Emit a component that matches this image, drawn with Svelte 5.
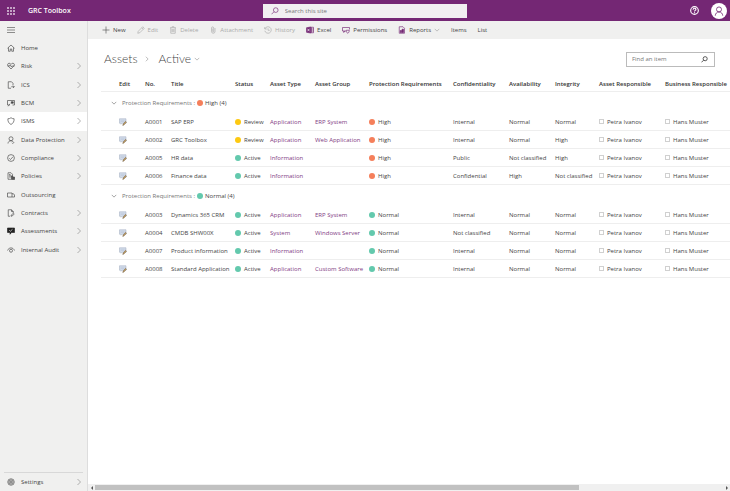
<script lang="ts">
	interface NavItem {
		label: string;
		icon: string;
		sub?: boolean;
	}

	interface Asset {
		no: string;
		title: string;
		status: string;
		type: string;
		group: string;
		conf: string;
		avail: string;
		integ: string;
	}

	const nav: NavItem[] = [
		{ label: "Home", icon: "home" },
		{ label: "Risk", icon: "heart", sub: true },
		{ label: "ICS", icon: "docArrow", sub: true },
		{ label: "BCM", icon: "screen", sub: true },
		{ label: "ISMS", icon: "shield", sub: true },
		{ label: "Data Protection", icon: "person", sub: true },
		{ label: "Compliance", icon: "check", sub: true },
		{ label: "Policies", icon: "policy", sub: true },
		{ label: "Outsourcing", icon: "truck" },
		{ label: "Contracts", icon: "contract", sub: true },
		{ label: "Assessments", icon: "assess", sub: true },
		{ label: "Internal Audit", icon: "eye", sub: true },
	];

	const commands = [
		{ label: "New", icon: "plus" },
		{ label: "Edit", icon: "pencil", off: true },
		{ label: "Delete", icon: "trash", off: true },
		{ label: "Attachment", icon: "clip", off: true },
		{ label: "History", icon: "history", off: true },
		{ label: "Excel", icon: "excel" },
		{ label: "Permissions", icon: "perms" },
		{ label: "Reports", icon: "report", menu: true },
		{ label: "Items" },
		{ label: "List" },
	];

	const columns = [
		"Edit",
		"No.",
		"Title",
		"Status",
		"Asset Type",
		"Asset Group",
		"Protection Requirements",
		"Confidentiality",
		"Availability",
		"Integrity",
		"Asset Responsible",
		"Business Responsible",
	];

	function asset(no: string, title: string, status: string, type: string, group: string, conf: string, avail: string, integ: string): Asset {
		return { no, title, status, type, group, conf, avail, integ };
	}

	const groups = [
		{
			level: "High",
			rows: [
				asset("A0001", "SAP ERP", "Review", "Application", "ERP System", "Internal", "Normal", "Normal"),
				asset("A0002", "GRC Toolbox", "Review", "Application", "Web Application", "Internal", "Normal", "High"),
				asset("A0005", "HR data", "Active", "Information", "", "Public", "Not classified", "High"),
				asset("A0006", "Finance data", "Active", "Information", "", "Confidential", "High", "Not classified"),
			],
		},
		{
			level: "Normal",
			rows: [
				asset("A0003", "Dynamics 365 CRM", "Active", "Application", "ERP System", "Internal", "Normal", "Normal"),
				asset("A0004", "CMDB SHW00X", "Active", "System", "Windows Server", "Not classified", "Normal", "Normal"),
				asset("A0007", "Product information", "Active", "Information", "", "Internal", "Normal", "Normal"),
				asset("A0008", "Standard Application", "Active", "Application", "Custom Software", "Internal", "Normal", "Normal"),
			],
		},
	];

	let current = $state("ISMS");
	let closed: Record<string, boolean> = $state({});
</script>

{#snippet icon(name: string)}
	<svg class="icon" viewBox="0 0 16 16" aria-hidden="true">
		{#if name === "home"}
			<path d="M1 8.5 8 2l7 6.5M3 7v7.5h3.5V10h3v4.5H13V7" />
		{:else if name === "heart"}
			<path d="M8 14 2 7.600C.4 5.600 1.400 2.500 4.300 2.500 6 2.500 7.200 3.300 8 4.600 8.800 3.300 10 2.500 11.700 2.500c2.900 0 3.900 3.100 2.300 5.100z" />
			<path d="M1 8h4l1.500-2.500L9 10l1.500-2H15" />
		{:else if name === "docArrow"}
			<path d="M8 14.500H2.500v-13H9l3 3V8M8.500 11.500h6M12 9l2.500 2.500L12 14" />
		{:else if name === "screen"}
			<path d="M5 12H1V3h14v9h-4M2.500 14.500 6 9.500" />
			<path class="solid" d="M8.500 5.500h4v3h-4z" />
		{:else if name === "shield"}
			<path d="M8 1.500C6 3 4 3.500 1.800 3.500 1.500 9 3.500 12.500 8 15c4.500-2.500 6.500-6 6.200-11.500C12 3.500 10 3 8 1.500z" />
		{:else if name === "person"}
			<circle cx="8" cy="5.500" r="4" />
			<path d="M2 15c.3-3.500 2.500-5.500 6-5.500 2 0 3.500.8 4.500 2.500M10 13.500l1.500 1.500 3-3" />
		{:else if name === "check"}
			<circle cx="8" cy="8" r="6.800" />
			<path d="m4.500 8.500 2.500 2.500 5-5.500" />
		{:else if name === "policy"}
			<path d="M2 14.500v-13h6l3 3V8M4 5h3M4 7.500h5M4 10h4M2 14.500h6" />
			<path class="solid" d="M9 8h2.500v7H9zM12.500 10H15v5h-2.500z" />
		{:else if name === "truck"}
			<path d="M1 4h9v8H1zM10 5.500h3l2 2.500v4h-5" />
		{:else if name === "contract"}
			<path d="M6 14.500H2.500v-13H9l3.500 3.500v3M9 1.500V5h3.500" />
			<path d="m8 14.500.5-2.500L13 8.500l1.500 1.500-4 4z" />
		{:else if name === "assess"}
			<path class="solid dark" d="M1 2h14v9H9l-3 3.500V11H1z" />
			<path class="light" d="m4.500 6.500 2.200 2L11 4.500" />
		{:else if name === "eye"}
			<path d="M1 9c1.500-3.500 4-5.200 7-5.200S13.500 5.500 15 9" />
			<circle cx="8" cy="9.500" r="3" />
		{:else if name === "gear"}
			<circle cx="8" cy="8" r="6.500" />
			<circle cx="8" cy="8" r="4.200" />
			<circle cx="8" cy="8" r="1.800" />
		{:else if name === "plus"}
			<path d="M8 1v14M1 8h14" />
		{:else if name === "pencil"}
			<path d="m1.500 14.500 1-4L11.500 1.500l3 3-9 9zM9.500 3.500l3 3" />
		{:else if name === "trash"}
			<path d="M2 3.500h12M6 3.500v-2h4v2M3.500 3.500v11h9v-11M6 6v6M8 6v6M10 6v6" />
		{:else if name === "clip"}
			<path d="M12 4v7.500c0 4-7 4-7 0V4c0-3 4.500-3 4.500 0v7c0 1.300-2 1.300-2 0V5" />
		{:else if name === "history"}
			<path d="M1.500 2v4h4M2 5.500a6.500 6.500 0 1 1-.3 4M8 4.500v4h3.500" />
		{:else if name === "excel"}
			<path d="M8 2.500h7v11H8M11 2.500v11M8 6h7M8 10h7" />
			<path class="solid" d="M1 3.500 9 2v12l-8-1.500z" />
			<path class="light" d="m3 5.500 4 5M7 5.500l-4 5" />
		{:else if name === "perms"}
			<path d="M8 10H1V3h14v4M3.500 10v3L6 10" />
			<path d="M8.500 8.500h6c0 3-1 5-3 6-2-1-3-3-3-6z" />
		{:else if name === "report"}
			<path d="M2.500 1.500H10l3 3v10H2.500z" />
			<path class="solid" d="M4.500 9H7v4H4.500zM8 6.500h3V13H8z" />
		{:else if name === "search"}
			<circle cx="9.500" cy="6.200" r="4.700" />
			<path d="M6 9.500 1 14.500" />
		{:else if name === "help"}
			<circle cx="8" cy="8" r="6.800" />
			<path d="M5.500 6.500c0-3.500 5-3.300 5-.4 0 1.600-2.500 1.800-2.500 3.600M8 11.300v1.400" />
		{:else if name === "user"}
			<circle cx="8" cy="5.500" r="4" />
			<path d="M2 15.500c.3-3.500 2.500-6 6-6s5.700 2.500 6 6" />
		{:else if name === "right"}
			<path d="m5 2 6 6-6 6" />
		{:else if name === "down"}
			<path d="m2 5 6 6 6-6" />
		{:else if name === "menu"}
			<path d="M0 3h16M0 8h16M0 13h16" />
		{/if}
	</svg>
{/snippet}

{#snippet dot(value: string)}
	<span class="dot {value.toLowerCase()}"></span>
{/snippet}

<div class="app">
	<header>
		<div class="brand">
			<button class="waffle" aria-label="App launcher">
				{#each Array(9) as _, i (i)}<i></i>{/each}
			</button>
			<a href="#top">GRC Toolbox</a>
		</div>
		<label class="site-search">
			{@render icon("search")}
			<input type="search" placeholder="Search this site" aria-label="Search this site" />
		</label>
		<div class="account">
			<button class="help" aria-label="Help">{@render icon("help")}</button>
			<button class="avatar" aria-label="Account">{@render icon("user")}</button>
		</div>
	</header>

	<aside>
		<button class="burger" aria-label="Collapse navigation">{@render icon("menu")}</button>
		<nav>
			{#each nav as item (item.label)}
				<a href="#{item.icon}" class:current={item.label === current} onclick={() => (current = item.label)}>
					{@render icon(item.icon)}
					<span>{item.label}</span>
					{#if item.sub}{@render icon("right")}{/if}
				</a>
			{/each}
		</nav>
		<div class="settings">
			<a href="#settings">
				{@render icon("gear")}
				<span>Settings</span>
				{@render icon("right")}
			</a>
		</div>
	</aside>

	<main>
		<div class="commands">
			{#each commands as c (c.label)}
				<button disabled={c.off}>
					{#if c.icon}{@render icon(c.icon)}{/if}
					{c.label}
					{#if c.menu}<span class="caret">{@render icon("down")}</span>{/if}
				</button>
			{/each}
		</div>

		<div class="title">
			<h1>Assets</h1>
			<span class="sep">{@render icon("right")}</span>
			<button class="view">Active <span class="caret">{@render icon("down")}</span></button>
			<label class="find">
				<input type="search" placeholder="Find an item" aria-label="Find an item" />
				{@render icon("search")}
			</label>
		</div>

		<div class="list">
			<table>
				<colgroup>
					{#each columns as _, i (i)}<col class="c{i}" />{/each}
				</colgroup>
				<thead>
					<tr>
						{#each columns as c (c)}<th scope="col">{c}</th>{/each}
					</tr>
				</thead>
				{#each groups as g (g.level)}
					<tbody>
						<tr class="group">
							<td colspan={columns.length}>
								<button onclick={() => (closed[g.level] = !closed[g.level])}>
									{@render icon(closed[g.level] ? "right" : "down")}
									<span class="field">Protection Requirements :</span>
									{@render dot(g.level)}
									<span>{g.level} ({g.rows.length})</span>
								</button>
							</td>
						</tr>
						{#if !closed[g.level]}
							{#each g.rows as r (r.no)}
								<tr>
									<td>
										<button class="edit" aria-label="Edit {r.title}">
											<svg viewBox="0 0 16 16" aria-hidden="true">
												<path fill="#d3dcea" stroke="#9eabbf" d="M1 1.500h13v9H6l-2 2v-2H1z" />
												<path stroke="#b4c1d4" d="M3 4.500h8M3 7h7" />
												<path fill="#c8a05a" stroke="#6b5f55" d="m7.500 15 .8-3L13 6.500l2 1.800-5 5.500z" />
											</svg>
										</button>
									</td>
									<td>{r.no}</td>
									<td>{r.title}</td>
									<td><span class="tag">{@render dot(r.status)}{r.status}</span></td>
									<td><a href="#{r.no}-type">{r.type}</a></td>
									<td>{#if r.group}<a href="#{r.no}-group">{r.group}</a>{/if}</td>
									<td><span class="tag">{@render dot(g.level)}{g.level}</span></td>
									<td>{r.conf}</td>
									<td>{r.avail}</td>
									<td>{r.integ}</td>
									<td><span class="tag"><span class="presence"></span>Petra Ivanov</span></td>
									<td><span class="tag"><span class="presence"></span>Hans Muster</span></td>
								</tr>
							{/each}
						{/if}
					</tbody>
				{/each}
			</table>
		</div>

		<div class="scroll">
			<button aria-label="Scroll left"><svg viewBox="0 0 4 4"><path d="M3 0v4L1 2z" /></svg></button>
			<div class="track"><div class="thumb"></div></div>
			<button aria-label="Scroll right"><svg viewBox="0 0 4 4"><path d="M1 0v4l2-2z" /></svg></button>
		</div>
	</main>
</div>

<style>
	:global(body) {
		background: #fff;
	}
	.app {
		display: grid;
		grid-template: auto 1fr / 88px 1fr;
		min-height: 100vh;
		font: 6px/8px "Segoe UI", "Open Sans", "Noto Sans", sans-serif;
		color: #444;
	}
	button,
	input {
		padding: 0;
		border: 0;
		background: none;
		font: inherit;
		color: inherit;
		outline: none;
	}
	input {
		flex: 1;
		min-width: 0;
		appearance: none;
	}
	input::placeholder {
		color: #777;
		opacity: 1;
	}
	a {
		color: inherit;
		text-decoration: none;
	}
	.icon {
		display: block;
		flex: none;
		width: 8px;
		height: 8px;
		fill: none;
		stroke: currentColor;
		stroke-width: 1.3;
	}
	.icon .solid {
		fill: currentColor;
	}
	.icon .dark {
		fill: #222;
		stroke: #222;
	}
	.icon .light {
		stroke: #fff;
	}

	header {
		grid-column: 1 / -1;
		display: grid;
		grid-template-columns: 1fr 28% 1fr;
		align-items: center;
		height: 21px;
		background: #742774;
		color: #fff;
	}
	.brand {
		display: flex;
		align-items: center;
		gap: 13px;
		padding-left: 7px;
		font-size: 7px;
		font-weight: 600;
	}
	.waffle {
		display: grid;
		grid-template-columns: repeat(3, 2px);
		gap: 1px;
	}
	.waffle i {
		height: 2px;
		background: #c4a2c4;
	}
	.site-search {
		display: flex;
		align-items: center;
		gap: 6px;
		height: 14px;
		padding: 0 8px;
		background: #f1eff1;
		color: #742774;
	}
	.account {
		display: flex;
		align-items: center;
		justify-content: flex-end;
		gap: 12px;
		padding-right: 3px;
	}
	.help .icon {
		width: 9px;
		height: 9px;
		stroke-width: 2;
	}
	.avatar {
		display: grid;
		place-items: center;
		width: 16px;
		height: 16px;
		border-radius: 50%;
		background: #fff;
		color: #742774;
	}
	.avatar .icon {
		width: 10px;
		height: 10px;
	}

	aside {
		display: flex;
		flex-direction: column;
		box-sizing: border-box;
		background: #f0f0ef;
		border-right: 1px solid #ddd;
	}
	.burger {
		height: 18px;
		padding-left: 7px;
		color: #555;
	}
	nav {
		display: grid;
		grid-auto-rows: 1fr;
		min-height: 220px;
	}
	nav a,
	.settings a {
		display: flex;
		align-items: center;
		gap: 6px;
		padding: 0 6px 0 7px;
	}
	aside a span {
		flex: 1;
	}
	aside a .icon:last-child {
		color: #888;
		margin-right: -2px;
	}
	.current {
		background: #fff;
	}
	.settings {
		margin: auto 4px 0;
		border-top: 1px solid #d8d8d8;
	}
	.settings a {
		height: 18px;
		padding: 0 2px 0 3px;
	}

	main {
		display: flex;
		flex-direction: column;
		min-width: 0;
	}
	.commands {
		display: flex;
		align-items: center;
		gap: 11px;
		height: 18px;
		padding-left: 14px;
		background: #f0f0ef;
	}
	.commands button {
		display: flex;
		align-items: center;
		gap: 3px;
	}
	.commands .icon {
		color: #742774;
	}
	.commands button:first-child .icon {
		color: #555;
	}
	.commands button:disabled,
	.commands button:disabled .icon {
		color: #aaa;
	}
	.commands .caret .icon {
		width: 6px;
		color: #888;
	}
	.title {
		display: flex;
		align-items: center;
		height: 40px;
		padding: 0 15px 0 16px;
		font: 300 12px/16px "Segoe UI", Lato, "Open Sans", sans-serif;
	}
	h1 {
		margin: 0;
		font: inherit;
	}
	.sep {
		margin: 0 9px 0 6px;
	}
	.title .sep .icon,
	.title .caret .icon {
		width: 6px;
		height: 6px;
		color: #777;
	}
	.view {
		display: flex;
		align-items: center;
		gap: 3px;
	}
	.find {
		display: flex;
		align-items: center;
		box-sizing: border-box;
		width: 89px;
		height: 15px;
		margin-left: auto;
		padding: 0 6px 0 5px;
		border: 1px solid #bbb;
		font: 6px/8px "Segoe UI", "Open Sans", "Noto Sans", sans-serif;
	}
	.find .icon {
		width: 7px;
		height: 7px;
		stroke-width: 2;
	}

	.list {
		flex: 1;
		padding-left: 13px;
		overflow: hidden;
	}
	table {
		width: 100%;
		table-layout: fixed;
		border-collapse: separate;
		border-spacing: 0;
	}
	.c0 { width: 44px; }
	.c1 { width: 26px; }
	.c2 { width: 64px; }
	.c3 { width: 35px; }
	.c4 { width: 45px; }
	.c5 { width: 54px; }
	.c6 { width: 84px; }
	.c7 { width: 56px; }
	.c8 { width: 46px; }
	.c9 { width: 44px; }
	.c10 { width: 66px; }
	th,
	td {
		box-sizing: border-box;
		height: 18px;
		padding: 0;
		border-bottom: 1px solid #eee;
		text-align: left;
		white-space: nowrap;
	}
	th {
		height: 13px;
		padding-bottom: 3px;
		font-weight: 600;
		color: #333;
	}
	th:first-child,
	td:first-child {
		padding-left: 18px;
	}
	td a {
		color: #7f3c84;
	}
	.group td {
		height: 21px;
		padding-left: 10px;
		border-bottom: 0;
	}
	.group button {
		display: flex;
		align-items: center;
		gap: 2px;
	}
	.group .icon {
		width: 6px;
		height: 6px;
		margin-right: 3px;
	}
	.field {
		color: #777;
	}
	.edit,
	.edit svg {
		display: block;
		width: 8px;
		height: 8px;
	}
	.tag {
		display: flex;
		align-items: center;
		gap: 3px;
	}
	.dot {
		width: 6px;
		height: 6px;
		border-radius: 50%;
		background: #63c9ad;
	}
	.dot.high {
		background: #f57f5b;
	}
	.dot.review {
		background: #fdc911;
	}
	.presence {
		box-sizing: border-box;
		width: 5px;
		height: 5px;
		border: 1px solid #d0d0d0;
	}

	.scroll {
		display: flex;
		height: 7px;
		background: #f0f0f0;
	}
	.scroll button {
		display: grid;
		place-items: center;
		width: 7px;
	}
	.scroll svg {
		width: 4px;
		height: 4px;
		fill: #555;
	}
	.track {
		flex: 1;
		padding: 1px 0;
	}
	.thumb {
		width: 77%;
		height: 5px;
		background: #c1c1c1;
	}
</style>
